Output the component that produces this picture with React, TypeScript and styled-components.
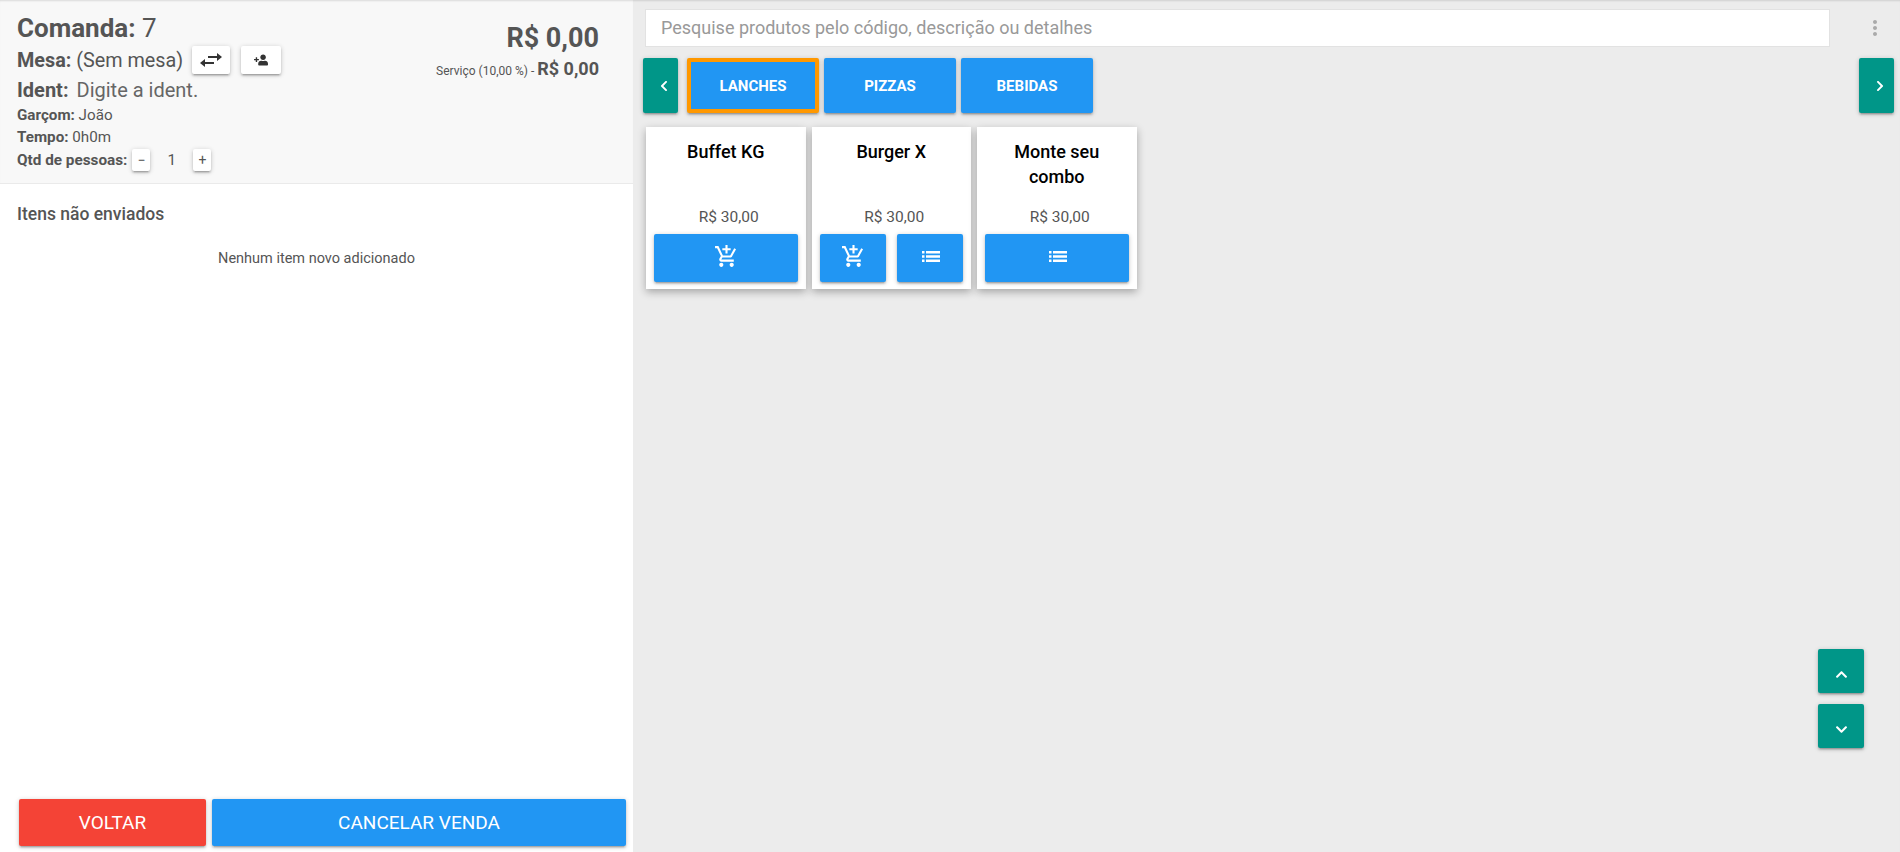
import React from "react";
import styled, { createGlobalStyle } from "styled-components";
import { FaChevronDown, FaChevronLeft, FaChevronRight, FaChevronUp, FaUserPlus } from "react-icons/fa";
import { MdMoreVert, MdOutlineAddShoppingCart } from "react-icons/md";

const GlobalStyle = createGlobalStyle`
    html, body {
        margin: 0;
        height: 100%;
        overflow: hidden;
    }
    body {
        font-family: Roboto, "Liberation Sans", sans-serif;
        color: #555;
        background: #ececec;
    }
    * {
        box-sizing: border-box;
    }
`;

const shadow = "0 2px 2px 0 rgba(0,0,0,.14), 0 3px 1px -2px rgba(0,0,0,.12), 0 1px 5px 0 rgba(0,0,0,.2)";

const products = [
    { name: "Buffet KG", cart: true, list: false },
    { name: "Burger X", cart: true, list: true },
    { name: "Monte seu combo", cart: false, list: true },
];

const categories = ["LANCHES", "PIZZAS", "BEBIDAS"];

const SwapIcon = () => <svg width="22" height="14" viewBox="0 0 22 14" fill="#333">
    <path d="M8 3h9V0l5 4-5 4V5H8z"/>
    <path d="M14 9H5V6l-5 4 5 4v-3h9z"/>
</svg>;

const ListIcon = () => <svg width="18" height="11" viewBox="0 0 18 11" fill="currentColor">
    <path d="M0 0h2.5v2.5H0zM4 0h14v2.5H4zM0 4.25h2.5v2.5H0zM4 4.25h14v2.5H4zM0 8.5h2.5V11H0zM4 8.5h14V11H4z"/>
</svg>;

const App = () => {
    return <Page>
        <GlobalStyle/>
        <Sale>
            <Summary>
                <Info>
                    <TitleRow><b>Comanda:</b> 7</TitleRow>
                    <MesaRow>
                        <span><b>Mesa:</b> (Sem mesa)</span>
                        <WhiteButton $width={38}><SwapIcon/></WhiteButton>
                        <WhiteButton $width={40}><FlippedUser size={14}/></WhiteButton>
                    </MesaRow>
                    <IdentRow><b>Ident:</b><IdentInput>Digite a ident.</IdentInput></IdentRow>
                    <SmallRow><b>Garçom:</b> João</SmallRow>
                    <SmallRow><b>Tempo:</b> 0h0m</SmallRow>
                    <PeopleRow>
                        <b>Qtd de pessoas:</b>
                        <StepButton>−</StepButton>
                        <Count>1</Count>
                        <StepButton>+</StepButton>
                    </PeopleRow>
                </Info>
                <Totals>
                    <Total>R$ 0,00</Total>
                    <Service>Serviço (10,00 %) - <b>R$ 0,00</b></Service>
                </Totals>
            </Summary>
            <Items>
                <ItemsTitle>Itens não enviados</ItemsTitle>
                <Empty>Nenhum item novo adicionado</Empty>
            </Items>
            <Footer>
                <FooterButton $color="#f44336" $width={187}>VOLTAR</FooterButton>
                <FooterButton $color="#2196f3" $width={414}>CANCELAR VENDA</FooterButton>
            </Footer>
        </Sale>
        <Catalog>
            <SearchRow>
                <Search placeholder="Pesquise produtos pelo código, descrição ou detalhes"/>
                <Menu><MdMoreVert size={24}/></Menu>
            </SearchRow>
            <TabsRow>
                <ArrowButton><FaChevronLeft size={12}/></ArrowButton>
                <Tabs>
                    {categories.map((c, i) => <Tab key={c} $active={i === 0}>{c}</Tab>)}
                </Tabs>
                <ArrowButton><FaChevronRight size={12}/></ArrowButton>
            </TabsRow>
            <Grid>
                {products.map(p => <Card key={p.name}>
                    <CardName>{p.name}</CardName>
                    <Price>R$ 30,00</Price>
                    <CardActions>
                        {p.cart && <CardButton><MdOutlineAddShoppingCart size={25}/></CardButton>}
                        {p.list && <CardButton><ListIcon/></CardButton>}
                    </CardActions>
                </Card>)}
            </Grid>
            <ScrollButtons>
                <ScrollButton><FaChevronUp size={13}/></ScrollButton>
                <ScrollButton><FaChevronDown size={13}/></ScrollButton>
            </ScrollButtons>
        </Catalog>
    </Page>
}

export default App;

const Page = styled.div`
    display: flex;
    height: 852px;
    box-shadow: inset 0 2px 2px -1px rgba(0,0,0,.12);
`;

const Sale = styled.div`
    width: 633px;
    flex: none;
    display: flex;
    flex-direction: column;
    background: #fff;
`;

const Summary = styled.div`
    height: 184px;
    flex: none;
    display: flex;
    justify-content: space-between;
    padding: 12px 34px 0 17px;
    background: #f8f8f8;
    border-bottom: 1px solid #eaeaea;
    box-shadow: inset 0 2px 2px -1px rgba(0,0,0,.12);
`;

const Info = styled.div`
    display: flex;
    flex-direction: column;
    b {
        font-weight: 700;
    }
`;

const TitleRow = styled.div`
    font-size: 26px;
    line-height: 32px;
    height: 32px;
`;

const MesaRow = styled.div`
    display: flex;
    align-items: center;
    gap: 9px;
    height: 28px;
    margin-top: 2px;
    font-size: 19.8px;
`;

const WhiteButton = styled.div<{ $width: number }>`
    width: ${props => props.$width}px;
    height: 28px;
    display: flex;
    align-items: center;
    justify-content: center;
    background: #fff;
    color: #333;
    border-radius: 2px;
    box-shadow: ${shadow};
    & + & {
        margin-left: 2px;
    }
`;

const FlippedUser = styled(FaUserPlus)`
    transform: scaleX(-1);
`;

const IdentRow = styled.div`
    display: flex;
    align-items: center;
    gap: 8px;
    height: 28px;
    margin-top: 2px;
    font-size: 20px;
`;

const IdentInput = styled.span`
    color: #666;
`;

const SmallRow = styled.div`
    font-size: 15.2px;
    line-height: 22px;
    height: 22px;
`;

const PeopleRow = styled.div`
    display: flex;
    align-items: center;
    height: 24px;
    font-size: 15.3px;
`;

const StepButton = styled.div`
    width: 18px;
    height: 22px;
    margin-left: 5px;
    display: flex;
    align-items: center;
    justify-content: center;
    background: #fff;
    border-radius: 2px;
    font-size: 14px;
    box-shadow: ${shadow};
`;

const Count = styled.div`
    width: 43px;
    margin-right: -5px;
    text-align: center;
`;

const Totals = styled.div`
    display: flex;
    flex-direction: column;
    align-items: flex-end;
    padding-top: 10px;
`;

const Total = styled.div`
    font-size: 27px;
    font-weight: 700;
    line-height: 32px;
`;

const Service = styled.div`
    font-size: 12px;
    line-height: 24px;
    margin-top: 3px;
    b {
        font-size: 18px;
        font-weight: 700;
    }
`;

const Items = styled.div`
    flex: 1;
    padding: 19px 17px 0;
`;

const ItemsTitle = styled.div`
    font-size: 17.5px;
    font-weight: 500;
    line-height: 22px;
`;

const Empty = styled.div`
    margin-top: 23px;
    text-align: center;
    font-size: 14.5px;
    line-height: 22px;
`;

const Footer = styled.div`
    display: flex;
    gap: 6px;
    padding: 0 7px 6px 19px;
`;

const FooterButton = styled.div<{ $color: string; $width: number }>`
    width: ${props => props.$width}px;
    height: 47px;
    display: flex;
    align-items: center;
    justify-content: center;
    background: ${props => props.$color};
    color: #fff;
    font-size: 19px;
    border-radius: 2px;
    box-shadow: ${shadow};
`;

const Catalog = styled.div`
    flex: 1;
    position: relative;
    padding: 9px 6px 0 10px;
`;

const SearchRow = styled.div`
    display: flex;
    align-items: center;
    padding-left: 2px;
    height: 38px;
`;

const Search = styled.input`
    width: 1185px;
    height: 38px;
    padding: 0 15px 2px;
    background: #fff;
    border: 1px solid #e2e2e2;
    outline: none;
    font-family: inherit;
    font-size: 18px;
    color: #555;
    &::placeholder {
        color: #999;
        opacity: 1;
    }
`;

const Menu = styled.div`
    margin-left: 33px;
    display: flex;
    color: #aaa;
`;

const TabsRow = styled.div`
    display: flex;
    justify-content: space-between;
    align-items: center;
    margin-top: 11px;
`;

const ArrowButton = styled.div`
    width: 35px;
    height: 55px;
    display: flex;
    align-items: center;
    justify-content: center;
    padding-left: 6px;
    background: #009688;
    color: #fff;
    border-radius: 2px;
    box-shadow: ${shadow};
`;

const Tabs = styled.div`
    flex: 1;
    display: flex;
    gap: 5px;
    padding-left: 9px;
`;

const Tab = styled.div<{ $active: boolean }>`
    width: 132px;
    height: 55px;
    display: flex;
    align-items: center;
    justify-content: center;
    background: #2196f3;
    color: #fff;
    font-size: 15px;
    font-weight: 700;
    border-radius: 2px;
    border: ${props => props.$active ? "4px solid #ff9800" : "none"};
    box-shadow: ${shadow};
`;

const Grid = styled.div`
    display: flex;
    gap: 6px;
    margin: 14px 0 0 3px;
`;

const Card = styled.div`
    width: 159.5px;
    height: 162px;
    display: flex;
    flex-direction: column;
    background: #fff;
    box-shadow: 0 3px 8px rgba(0,0,0,.3);
    padding: 12px 8px 7px;
`;

const CardName = styled.div`
    height: 68px;
    padding: 0 10px;
    text-align: center;
    color: #000;
    font-size: 18px;
    font-weight: 500;
    line-height: 25px;
`;

const Price = styled.div`
    padding-left: 6px;
    text-align: center;
    font-size: 15.5px;
    line-height: 20px;
`;

const CardActions = styled.div`
    display: flex;
    gap: 11px;
    margin-top: 7px;
`;

const CardButton = styled.div`
    flex: 1;
    height: 48px;
    display: flex;
    align-items: center;
    justify-content: center;
    padding: 0 0 4px 2px;
    background: #2196f3;
    color: #fff;
    border-radius: 2px;
    box-shadow: ${shadow};
`;

const ScrollButtons = styled.div`
    position: absolute;
    top: 649px;
    right: 36px;
    display: flex;
    flex-direction: column;
    gap: 11px;
`;

const ScrollButton = styled.div`
    width: 46px;
    height: 44px;
    display: flex;
    align-items: center;
    justify-content: center;
    padding-top: 6px;
    background: #009688;
    color: #fff;
    border-radius: 2px;
    box-shadow: ${shadow};
`;
